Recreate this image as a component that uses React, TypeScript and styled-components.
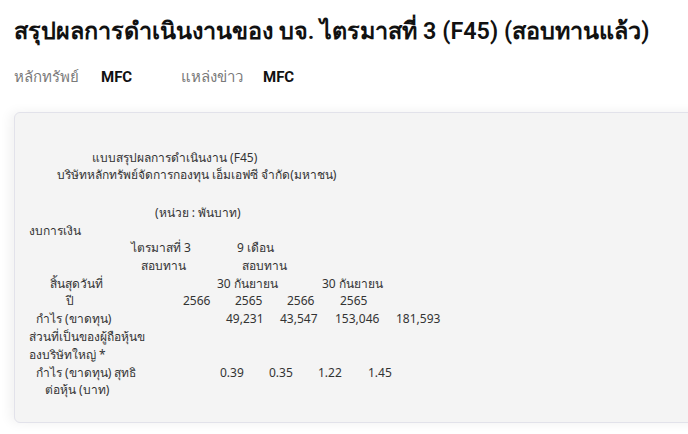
import React from "react";
import styled, { createGlobalStyle } from "styled-components";

const Global = createGlobalStyle`
  html, body { margin: 0; padding: 0; background: #ffffff; }
  body { font-family: "Noto Sans", Roboto, sans-serif; overflow: hidden; }
`;

const Page = styled.div`
  width: 688px;
  height: 434px;
  overflow: hidden;
  padding: 14px 0 0 14px;
  box-sizing: border-box;
`;

const Title = styled.h1`
  margin: 0;
  font-family: Roboto, "Noto Sans", sans-serif;
  font-size: 23.4px;
  font-weight: 600;
  color: #111;
  line-height: 34px;
  white-space: nowrap;
`;

const Meta = styled.div`
  display: flex;
  align-items: center;
  margin-top: 18px;
  height: 22px;
  font-family: Roboto, "Noto Sans", sans-serif;
  font-size: 15px;
`;

const MetaLabel = styled.span<{ $w: number }>`
  color: #7a7a7a;
  width: ${(p) => p.$w}px;
`;

const MetaValue = styled.span<{ $w: number }>`
  color: #111;
  font-weight: 700;
  width: ${(p) => p.$w}px;
`;

const Panel = styled.div`
  margin-top: 24px;
  width: 700px;
  height: 311px;
  box-sizing: border-box;
  background: #f4f4f4;
  border: 1px solid #e2e2ea;
  border-radius: 6px;
  box-shadow: -4px 0 12px rgba(0, 0, 0, 0.06);
  padding: 36px 0 0 0;
  font-family: Tahoma, "Noto Sans", "DejaVu Sans", sans-serif;
  font-size: 12px;
  color: #333;
`;

const Line = styled.div<{ $h: number }>`
  display: flex;
  height: ${(p) => p.$h}px;
  line-height: ${(p) => p.$h}px;
  white-space: nowrap;
`;

const Cell = styled.span<{ $w: number }>`
  flex: 0 0 auto;
  width: ${(p) => p.$w}px;
`;

type Row = { h: number; cells: [number, string][] };

const rows: Row[] = [
  { h: 17, cells: [[77, "แบบสรุปผลการดำเนินงาน (F45)"]] },
  { h: 18, cells: [[42, "บริษัทหลักทรัพย์จัดการกองทุน เอ็มเอฟซี จำกัด(มหาชน)"]] },
  { h: 20, cells: [] },
  { h: 18, cells: [[140, "(หน่วย : พันบาท)"]] },
  { h: 17, cells: [[14, "งบการเงิน"]] },
  { h: 18, cells: [[116, "ไตรมาสที่ 3"], [222, "9 เดือน"]] },
  { h: 18, cells: [[126, "สอบทาน"], [227, "สอบทาน"]] },
  { h: 17, cells: [[35, "สิ้นสุดวันที่"], [202, "30 กันยายน"], [307, "30 กันยายน"]] },
  { h: 18, cells: [[51, "ปี"], [168, "2566"], [220, "2565"], [272, "2566"], [325, "2565"]] },
  { h: 18, cells: [[21, "กำไร (ขาดทุน)"], [211, "49,231"], [265, "43,547"], [320, "153,046"], [381, "181,593"]] },
  { h: 18, cells: [[14, "ส่วนที่เป็นของผู้ถือหุ้นข"]] },
  { h: 18, cells: [[14, "องบริษัทใหญ่ *"]] },
  { h: 17, cells: [[21, "กำไร (ขาดทุน) สุทธิ"], [205, "0.39"], [254, "0.35"], [303, "1.22"], [353, "1.45"]] },
  { h: 18, cells: [[30, "ต่อหุ้น (บาท)"]] },
];

function renderLine(r: Row, i: number) {
  const items: React.ReactNode[] = [];
  let cursor = 0;
  r.cells.forEach(([x, t], j) => {
    if (x > cursor) items.push(<Cell key={`g${j}`} $w={x - cursor} />);
    const next = j + 1 < r.cells.length ? r.cells[j + 1][0] : x + 300;
    items.push(
      <Cell key={`c${j}`} $w={next - x}>
        {t}
      </Cell>
    );
    cursor = next;
  });
  return (
    <Line key={i} $h={r.h}>
      {items}
    </Line>
  );
}

export default function App() {
  return (
    <>
      <Global />
      <Page>
        <Title>สรุปผลการดำเนินงานของ บจ. ไตรมาสที่ 3 (F45) (สอบทานแล้ว)</Title>
        <Meta>
          <MetaLabel $w={87}>หลักทรัพย์</MetaLabel>
          <MetaValue $w={80}>MFC</MetaValue>
          <MetaLabel $w={82}>แหล่งข่าว</MetaLabel>
          <MetaValue $w={60}>MFC</MetaValue>
        </Meta>
        <Panel>{rows.map(renderLine)}</Panel>
      </Page>
    </>
  );
}
